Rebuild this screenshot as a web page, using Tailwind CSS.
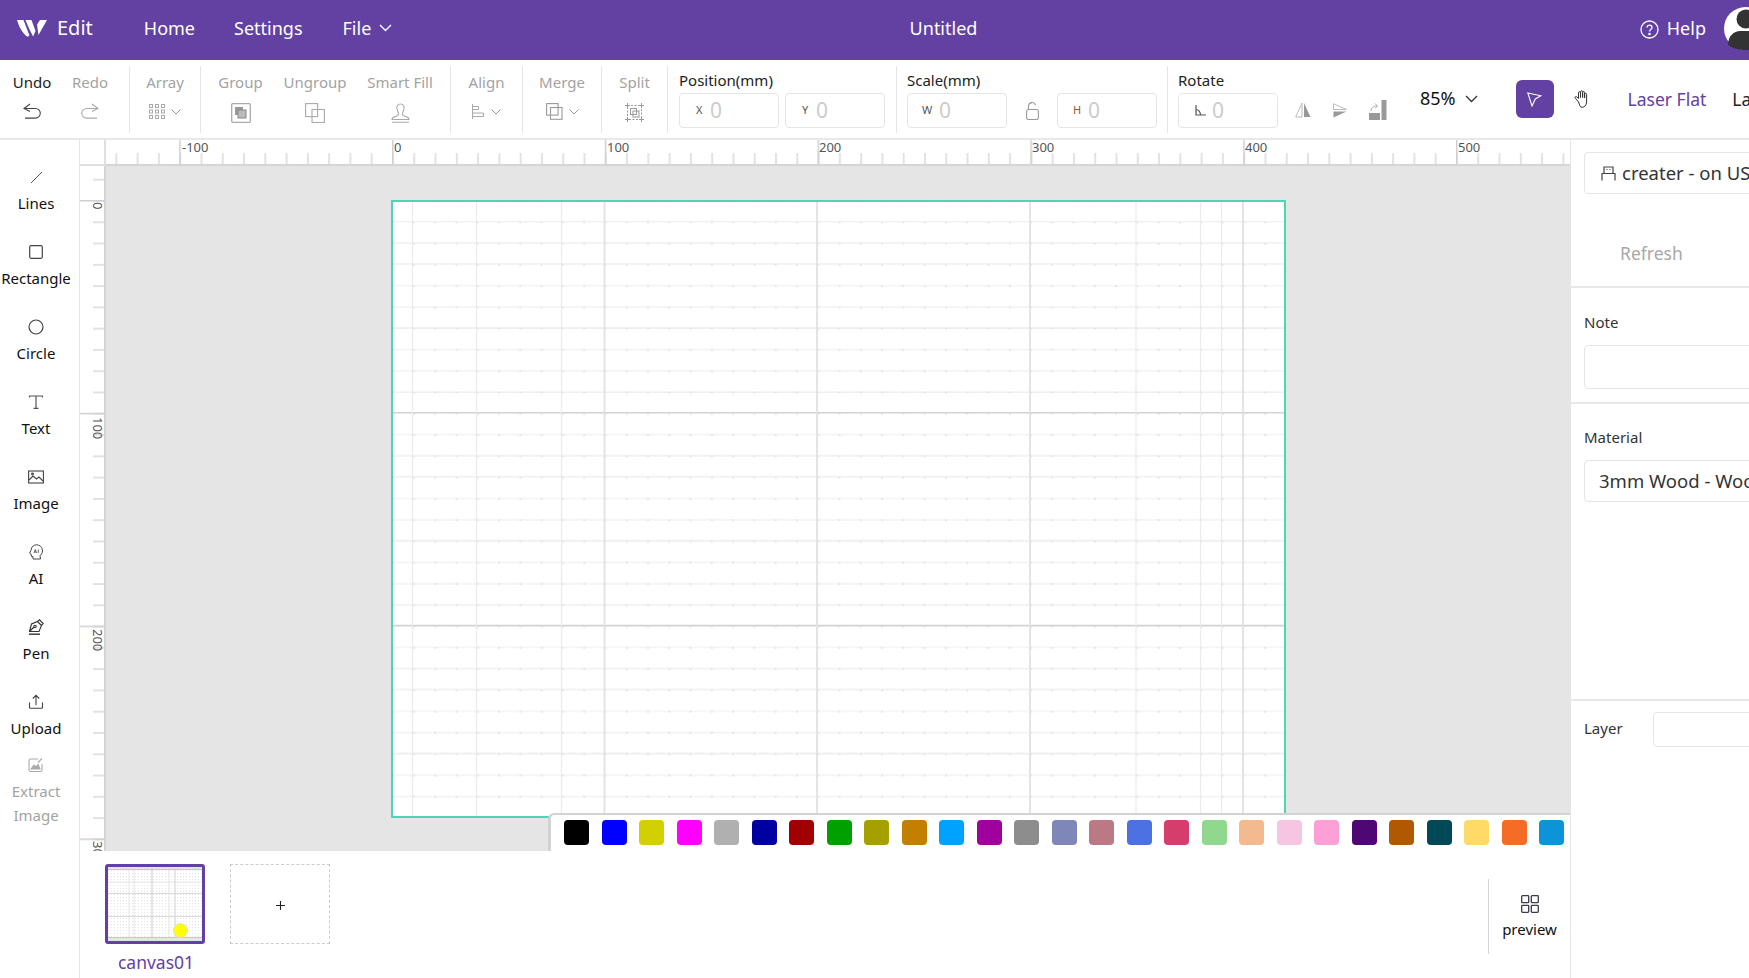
<!DOCTYPE html>
<html>
<head>
<meta charset="utf-8">
<script src="https://cdn.jsdelivr.net/npm/@tailwindcss/browser@4"></script>
</head>
<body class="m-0 bg-white">
<div class="w-[1749px] h-[978px] overflow-hidden flex flex-col bg-white text-[#222] font-['Noto_Sans','Liberation_Sans',sans-serif]">

  <!-- header -->
  <header class="h-[60px] shrink-0 bg-[#6341a3] text-white flex items-center text-[18px]">
    <div class="w-[420px] shrink-0 flex items-center mb-[4px]">
      <svg class="ml-[17px] w-[30px] h-[18px]" viewBox="0 0 30 18"><path fill="#fff" d="M0 1h6.500l6 15.500-2 1.200C6 15 2 8 0 1zM8.500 1h6l4 11-2.400 5.500C13 12 10.500 6 8.500 1zM20 5.500 23 1h7l-8.500 15z"/></svg>
      <span class="ml-[10px] text-[20px]">Edit</span>
      <span class="ml-[51px]">Home</span>
      <span class="ml-[39px]">Settings</span>
      <span class="ml-[40px]">File</span>
      <svg class="ml-[8px] w-[13px] h-[8px]" viewBox="0 0 13 8" fill="none" stroke="#fff" stroke-width="1.400"><path d="M1 1l5.500 5.500L12 1"/></svg>
    </div>
    <div class="flex-1 text-center mb-[4px]">Untitled</div>
    <div class="w-[282px] shrink-0 flex items-center justify-end">
      <svg class="w-[19px] h-[19px] mb-[2px]" viewBox="0 0 19 19" fill="none" stroke="#fff" stroke-width="1.300"><circle cx="9.500" cy="9.500" r="8.500"/><path d="M7 7.500c0-3.300 5-3.300 5 0 0 2-2.500 2-2.500 4"/><circle cx="9.500" cy="14" r=".6" fill="#fff"/></svg>
      <span class="ml-[8px] mb-[4px]">Help</span>
      <svg class="ml-[18px] mr-[-18px] mb-[3px] w-[43px] h-[43px] shrink-0" viewBox="0 0 43 43"><circle cx="21.500" cy="21.500" r="21.500" fill="#fff"/><circle cx="22" cy="12" r="9.500" fill="#333"/><path fill="#333" d="M4 38c0-9 6-14 12-14h12c6 0 11 5 11 14-4 3.500-10 5-17 5-7 0-14-2-18-5z"/></svg>
    </div>
  </header>

  <!-- toolbar -->
  <div class="h-[80px] shrink-0 flex border-b-2 border-[#e8e8e8] text-[15px] text-[#a3a3a3]">
    <div class="w-[130px] shrink-0 h-[67px] mt-[6px] pl-[3px] flex border-r border-[#e5e5e5]">
      <div class="w-[58px] flex flex-col items-center text-[#222]">
        <span class="mt-[5px] leading-[22px]">Undo</span>
        <svg class="mt-[10px] w-[18px] h-[16px]" viewBox="0 0 18 16" fill="none" stroke="#444" stroke-width="1.100"><path d="M7 1 1 5.500l6 3M1 5.500h11.500a4.800 4.800 0 0 1 0 9.600H2"/></svg>
      </div>
      <div class="w-[58px] flex flex-col items-center">
        <span class="mt-[5px] leading-[22px]">Redo</span>
        <svg class="mt-[10px] w-[18px] h-[16px]" viewBox="0 0 18 16" fill="none" stroke="#aaa" stroke-width="1.100"><path d="M11 1l6 4.500-6 3M17 5.500H5.500a4.800 4.800 0 0 0 0 9.600H16"/></svg>
      </div>
    </div>
    <div class="w-[71px] shrink-0 h-[67px] mt-[6px] flex flex-col items-center border-r border-[#e5e5e5]">
      <span class="mt-[5px] leading-[22px]">Array</span>
      <div class="mt-[11px] flex items-center gap-[6px]">
        <svg class="w-[16px] h-[15px]" viewBox="0 0 16 15" fill="none" stroke="#aaa"><rect x=".5" y=".5" width="3" height="3"/><rect x="6.500" y=".5" width="3" height="3"/><rect x="12.500" y=".5" width="3" height="3"/><rect x=".5" y="6" width="3" height="3"/><rect x="6.500" y="6" width="3" height="3"/><rect x="12.500" y="6" width="3" height="3"/><rect x=".5" y="11.500" width="3" height="3"/><rect x="6.500" y="11.500" width="3" height="3"/><rect x="12.500" y="11.500" width="3" height="3"/></svg>
        <svg class="w-[10px] h-[6px]" viewBox="0 0 10 6" fill="none" stroke="#999"><path d="M.5.500 5 5 9.500.5"/></svg>
      </div>
    </div>
    <div class="w-[250px] shrink-0 h-[67px] mt-[6px] pl-[4px] flex border-r border-[#e5e5e5]">
      <div class="w-[71px] flex flex-col items-center">
        <span class="mt-[5px] leading-[22px]">Group</span>
        <svg class="mt-[10px] w-[20px] h-[20px]" viewBox="0 0 20 20" fill="none"><rect x=".7" y=".7" width="18.600" height="18.600" rx="1" stroke="#aaa" stroke-width="1.300"/><rect x="4" y="4" width="8" height="8" fill="#999"/><rect x="7" y="7" width="8" height="8" fill="#bbb" stroke="#888"/></svg>
      </div>
      <div class="w-[78px] flex flex-col items-center">
        <span class="mt-[5px] leading-[22px]">Ungroup</span>
        <svg class="mt-[10px] w-[20px] h-[20px]" viewBox="0 0 20 20" fill="none" stroke="#aaa" stroke-width="1.100"><rect x=".6" y=".6" width="12" height="13"/><rect x="7" y="6.500" width="12.400" height="13"/></svg>
      </div>
      <div class="w-[92px] flex flex-col items-center">
        <span class="mt-[5px] leading-[22px]">Smart Fill</span>
        <svg class="mt-[10px] w-[19px] h-[20px]" viewBox="0 0 19 20" fill="none" stroke="#aaa" stroke-width="1.100"><path d="M9.500 1C6.500 1 5.500 3.500 6 6c.4 2 1.500 3 1.500 5 0 1.500-1 2-3 2.500S1 15 1 16.500h17c0-1.500-1.500-2.500-3.500-3s-3-1-3-2.500c0-2 1.100-3 1.500-5 .5-2.500-.5-5-3.500-5zM1 19.300h17"/></svg>
      </div>
    </div>
    <div class="w-[72px] shrink-0 h-[67px] mt-[6px] flex flex-col items-center border-r border-[#e5e5e5]">
      <span class="mt-[5px] leading-[22px]">Align</span>
      <div class="mt-[11px] flex items-center gap-[7px]">
        <svg class="w-[12px] h-[15px]" viewBox="0 0 12 15" fill="none" stroke="#aaa"><path d="M.5 0v15M.5 2.500h6v3h-6M.5 9h11v3.500H.5"/></svg>
        <svg class="w-[10px] h-[6px]" viewBox="0 0 10 6" fill="none" stroke="#999"><path d="M.5.500 5 5 9.500.5"/></svg>
      </div>
    </div>
    <div class="w-[79px] shrink-0 h-[67px] mt-[6px] flex flex-col items-center border-r border-[#e5e5e5]">
      <span class="mt-[5px] leading-[22px]">Merge</span>
      <div class="mt-[10px] flex items-center gap-[6px]">
        <svg class="w-[17px] h-[17px]" viewBox="0 0 17 17" fill="none" stroke="#999" stroke-width="1.100"><rect x=".6" y=".6" width="11.500" height="11.500"/><rect x="4.500" y="4.500" width="11.500" height="11.800"/></svg>
        <svg class="w-[10px] h-[6px]" viewBox="0 0 10 6" fill="none" stroke="#999"><path d="M.5.500 5 5 9.500.5"/></svg>
      </div>
    </div>
    <div class="w-[66px] shrink-0 h-[67px] mt-[6px] flex flex-col items-center border-r border-[#e5e5e5]">
      <span class="mt-[5px] leading-[22px]">Split</span>
      <svg class="mt-[10px] w-[19px] h-[19px]" viewBox="0 0 19 19" fill="none" stroke="#999"><rect x="2.500" y="2.500" width="14" height="14" stroke-dasharray="2 1.500"/><rect x="5.500" y="5.500" width="6" height="6"/><rect x="8" y="8" width="6" height="6"/><path d="M0 2.500h5M2.500 0v5M14 2.500h5M16.500 0v5M0 16.500h5M2.500 14v5M14 16.500h5M16.500 14v5"/></svg>
    </div>

    <div class="w-[229px] shrink-0 h-[67px] mt-[6px] pl-[11px] flex flex-col border-r border-[#e5e5e5] text-[#222]">
      <span class="mt-[3px] leading-[22px]">Position(mm)</span>
      <div class="mt-[2px] flex gap-[6px]">
        <div class="w-[100px] h-[35px] border border-[#e5e5e5] rounded-[4px] flex items-center pl-[16px]"><span class="text-[11px] text-[#555] w-[14px]">X</span><span class="text-[21px] text-[#ccc]">0</span></div>
        <div class="w-[100px] h-[35px] border border-[#e5e5e5] rounded-[4px] flex items-center pl-[16px]"><span class="text-[11px] text-[#555] w-[14px]">Y</span><span class="text-[21px] text-[#ccc]">0</span></div>
      </div>
    </div>
    <div class="w-[271px] shrink-0 h-[67px] mt-[6px] pl-[10px] flex flex-col border-r border-[#e5e5e5] text-[#222]">
      <span class="mt-[3px] leading-[22px]">Scale(mm)</span>
      <div class="mt-[2px] flex items-center">
        <div class="w-[100px] h-[35px] border border-[#e5e5e5] rounded-[4px] flex items-center pl-[14px]"><span class="text-[11px] text-[#555] w-[17px]">W</span><span class="text-[21px] text-[#ccc]">0</span></div>
        <div class="w-[50px] flex justify-center"><svg class="w-[13px] h-[18px]" viewBox="0 0 13 18" fill="none" stroke="#999" stroke-width="1.100"><rect x=".6" y="7.500" width="11.800" height="10" rx="2"/><path d="M2.500 7.500V4a3.600 3.600 0 0 1 7-1"/></svg></div>
        <div class="w-[100px] h-[35px] border border-[#e5e5e5] rounded-[4px] flex items-center pl-[15px]"><span class="text-[11px] text-[#8a5a2a] w-[15px]">H</span><span class="text-[21px] text-[#ccc]">0</span></div>
      </div>
    </div>
    <div class="w-[100px] shrink-0 h-[67px] mt-[6px] ml-[10px] flex flex-col text-[#222]">
      <span class="mt-[3px] leading-[22px]">Rotate</span>
      <div class="mt-[2px] w-[100px] h-[35px] border border-[#e5e5e5] rounded-[4px] flex items-center pl-[16px]">
        <svg class="w-[11px] h-[11px] mr-[6px]" viewBox="0 0 11 11" fill="none" stroke="#555" stroke-width="1.200"><path d="M1 0v10h10M1 4.500c2.500 0 4.500 2.500 4.500 5.500"/></svg><span class="text-[21px] text-[#ccc]">0</span>
      </div>
    </div>
    <div class="flex items-center shrink-0">
      <svg class="ml-[17px] mt-[22px] w-[16px] h-[16px]" viewBox="0 0 16 16"><path fill="none" stroke="#bbb" d="M7 1v14H.7z"/><path fill="#999" d="M9 1l6.500 14H9z"/></svg>
      <svg class="ml-[22px] mt-[22px] w-[14px] h-[15px]" viewBox="0 0 14 15"><path fill="none" stroke="#bbb" d="M.5.800 13.500 6.500H.5z"/><path fill="#999" d="M.5 8.500h13L.5 14.500z"/></svg>
      <svg class="ml-[22px] mt-[22px] w-[18px] h-[20px]" viewBox="0 0 18 20"><rect y="13" width="11" height="7" fill="#999"/><rect x="12.500" width="5" height="20" fill="#999"/><path fill="none" stroke="#aaa" d="M2 11c0-3 2-5 6-5M6 3.500 8.500 6 6 8.500"/></svg>
      <span class="ml-[33px] mb-[2px] text-[18px] text-[#111]">85%</span>
      <svg class="ml-[9px] w-[13px] h-[8px]" viewBox="0 0 13 8" fill="none" stroke="#333" stroke-width="1.300"><path d="M1 1l5.500 5.500L12 1"/></svg>
      <div class="ml-[38px] w-[38px] h-[38px] rounded-[6px] bg-[#6341a3] flex items-center justify-center">
        <svg class="w-[15px] h-[15px]" viewBox="0 0 15 15" fill="none" stroke="#fff" stroke-width="1.100"><path d="M.8 1 14 3.800 8.300 7 5 14z"/></svg>
      </div>
      <svg class="ml-[20px] w-[17px] h-[18px]" viewBox="0 0 17 18" fill="none" stroke="#333" stroke-width="1"><path d="M4.500 12 1.300 8.200c-.9-1.200.6-2.300 1.600-1.300L4.500 8.500V2.800c0-1.400 2-1.400 2 0V7.500V1.800c0-1.400 2.100-1.400 2.100 0V7.500V2.500c0-1.400 2-1.400 2 0V8V4.300c0-1.300 2-1.300 2 0V12c0 3-2 5.300-4.500 5.300S6 15 4.500 12z"/></svg>
      <span class="ml-[37px] text-[17.500px] text-[#6341a3] whitespace-nowrap">Laser Flat</span>
      <span class="ml-[26px] text-[17.500px] text-[#222] whitespace-nowrap">Laser</span>
    </div>
  </div>

  <!-- body -->
  <div class="flex-1 min-h-0 flex">
    <!-- tools -->
    <aside class="w-[80px] shrink-0 border-r border-[#e5e5e5] pt-[29px] pr-[7px] flex flex-col items-center gap-[29px] text-[15px] leading-[24px] text-[#111]">
      <div class="flex flex-col items-center gap-[6px]"><svg class="w-[16px] h-[16px]" viewBox="0 0 16 16" stroke="#555"><path d="M3 14 14 3"/></svg><span>Lines</span></div>
      <div class="flex flex-col items-center gap-[6px]"><svg class="w-[16px] h-[16px]" viewBox="0 0 16 16" fill="none" stroke="#444" stroke-width="1.200"><rect x="1.700" y="1.700" width="12.600" height="12.600" rx="1.500"/></svg><span>Rectangle</span></div>
      <div class="flex flex-col items-center gap-[6px]"><svg class="w-[16px] h-[16px]" viewBox="0 0 16 16" fill="none" stroke="#444" stroke-width="1.200"><circle cx="8" cy="8" r="7"/></svg><span>Circle</span></div>
      <div class="flex flex-col items-center gap-[6px]"><svg class="w-[16px] h-[16px]" viewBox="0 0 16 16" fill="none" stroke="#555" stroke-width="1.200"><path d="M1.500 3.500V2h13v1.500M8 2v12M5.500 14.300h5"/></svg><span>Text</span></div>
      <div class="flex flex-col items-center gap-[6px]"><svg class="w-[16px] h-[16px]" viewBox="0 0 16 16" fill="none" stroke="#444" stroke-width="1.100"><rect x=".6" y="2" width="14.800" height="12"/><path d="M1 11l4-4 3.500 3 2.500-2 4 4"/><circle cx="4.500" cy="5" r=".9"/></svg><span>Image</span></div>
      <div class="flex flex-col items-center gap-[6px]"><svg class="w-[16px] h-[16px]" viewBox="0 0 16 16" fill="none" stroke="#444" stroke-width="1"><path d="M5 15v-2.500H3.500L3 10 1.500 9l1.500-2.500C3 3 5.500.8 8.500.8c3.500 0 6 2.700 6 6 0 2.500-1.500 4-2.500 5l.5 3.200z"/><path d="M6 9l1.300-3.500L8.600 9M6.400 8h1.800M10.300 5.500V9" stroke-width=".8"/></svg><span>AI</span></div>
      <div class="flex flex-col items-center gap-[6px]"><svg class="w-[16px] h-[16px]" viewBox="0 0 16 16" fill="none" stroke="#333" stroke-width="1.100"><path d="M1.500 12.500 3.500 5l6-2.500 4 4L11 12.500zM9.500 2.500 11.500.8l3.700 3.700-1.700 2M1.500 12.500 6 8"/><circle cx="7" cy="7.500" r="1.200"/><path d="M1 15.200h11" stroke-width="1.400"/></svg><span>Pen</span></div>
      <div class="flex flex-col items-center gap-[6px]"><svg class="w-[16px] h-[16px]" viewBox="0 0 16 16" fill="none" stroke="#444" stroke-width="1.100"><path d="M8 11V1.500M4.800 4.500 8 1.300l3.200 3.200M1.500 8.500v4.800c0 .6.500 1 1 1h11c.5 0 1-.4 1-1V8.500"/></svg><span>Upload</span></div>
      <div class="-mt-[12px] flex flex-col items-center gap-[6px] text-[#a3a3a3]"><svg class="w-[16px] h-[16px]" viewBox="0 0 16 16" fill="none" stroke="#aaa" stroke-width="1.100"><path d="M10 2H2.500c-.8 0-1.500.7-1.500 1.500v9.500c0 .8.700 1.500 1.500 1.500h10c.8 0 1.500-.7 1.500-1.500V7"/><path d="M3 12l3-4 2 2 2-2.500 2 4.500z" fill="#aaa"/><path d="M10 5.500 14 1.500"/></svg><span class="text-center">Extract<br>Image</span></div>
    </aside>

    <!-- workspace -->
    <div class="w-[1491px] shrink-0 flex flex-col border-r border-[#e5e5e5]">
      <div class="h-[26px] shrink-0 flex">
        <div class="w-[26px] shrink-0 border-r-2 border-b-2 border-[#e0e0e0]"></div>
        <div class="relative flex-1 overflow-hidden text-[13px] leading-none text-[#555] border-b-2 border-[#d5d5d5]">
          <svg class="absolute inset-0 w-full h-full">
            <defs>
              <pattern id="tt" width="21.280" height="25" x="286" y="0" patternUnits="userSpaceOnUse"><rect x="0" y="13" width="2" height="12" fill="#e2e2e2"/></pattern>
              <pattern id="tm" width="212.800" height="25" x="286" y="0" patternUnits="userSpaceOnUse"><rect x="0" y="0" width="1.500" height="25" fill="#cfcfcf"/></pattern>
            </defs>
            <rect width="100%" height="100%" fill="url(#tt)"/><rect width="100%" height="100%" fill="url(#tm)"/>
          </svg>
          <span class="absolute left-[76px] top-[1px]">-100</span>
          <span class="absolute left-[288px] top-[1px]">0</span>
          <span class="absolute left-[501px] top-[1px]">100</span>
          <span class="absolute left-[713px] top-[1px]">200</span>
          <span class="absolute left-[926px] top-[1px]">300</span>
          <span class="absolute left-[1139px] top-[1px]">400</span>
          <span class="absolute left-[1352px] top-[1px]">500</span>
        </div>
      </div>
      <div class="h-[685px] shrink-0 flex">
        <div class="relative w-[26px] shrink-0 overflow-hidden text-[13px] leading-none text-[#555] border-r-2 border-[#d5d5d5]">
          <svg class="absolute inset-0 w-full h-full">
            <defs>
              <pattern id="lt" width="25" height="21.280" x="0" y="34" patternUnits="userSpaceOnUse"><rect x="13" y="0" width="12" height="2" fill="#e2e2e2"/></pattern>
              <pattern id="lm" width="25" height="212.800" x="0" y="34" patternUnits="userSpaceOnUse"><rect x="0" y="0" width="25" height="1.500" fill="#cfcfcf"/></pattern>
            </defs>
            <rect width="100%" height="100%" fill="url(#lt)"/><rect width="100%" height="100%" fill="url(#lm)"/>
          </svg>
          <span class="absolute left-[11px] top-[36px] [writing-mode:vertical-rl]">0</span>
          <span class="absolute left-[11px] top-[251px] [writing-mode:vertical-rl]">100</span>
          <span class="absolute left-[11px] top-[463px] [writing-mode:vertical-rl]">200</span>
          <span class="absolute left-[11px] top-[675px] [writing-mode:vertical-rl]">300</span>
        </div>
        <div class="relative flex-1 bg-[#e5e5e5] overflow-hidden">
          <div class="absolute left-[285px] top-[34px] w-[895px] h-[618px] border-2 border-[#4fd4b8] bg-white overflow-hidden">
            <svg class="absolute left-[-2px] top-[-2px] w-[895px] h-[618px]" viewBox="391 200 895 618">
              <defs>
                <pattern id="dots" width="21.280" height="21.280" x="391.700" y="200" patternUnits="userSpaceOnUse"><rect x="0" y="0" width="2" height="2" fill="#e6e6e6"/></pattern>
                <pattern id="rows" width="895" height="212.800" x="391" y="200" patternUnits="userSpaceOnUse">
                  <path stroke-width="1.100" stroke="#f0f0f0" d="M0 21.600H895M0 85.600H895M0 107H895M0 149.500H895M0 171H895"/>
                  <path stroke-width="1.100" stroke="#e8e8e8" d="M0 43H895M0 64H895M0 128H895M0 192H895"/>
                </pattern>
              </defs>
              <rect x="391" y="200" width="895" height="618" fill="url(#rows)"/>
              <rect x="391" y="200" width="895" height="618" fill="url(#dots)"/>
              <path stroke="#d2d2d2" stroke-width="1.600" fill="none" d="M391 412.800H1286M391 625.600H1286"/>
              <path stroke="#ebebeb" stroke-width="1.200" fill="none" d="M412.500 200V818M476.500 200V818M561.500 200V818M1136 200V818M1200.500 200V818M1221.500 200V818"/>
              <path stroke="#e2e2e2" stroke-width="1.800" fill="none" d="M604.500 200V818M817 200V818M1030 200V818M1243 200V818"/>
            </svg>
          </div>
          <!-- colour palette -->
          <div class="absolute left-[442px] right-0 bottom-0 h-[38px] bg-white border-t-2 border-l-3 border-[#d2d2d2] rounded-tl-[6px] pl-[13px] pt-[5px] flex gap-[12.500px]">
            <i class="block shrink-0 w-[25px] h-[25px] rounded-[4px] bg-[#000000]"></i>
            <i class="block shrink-0 w-[25px] h-[25px] rounded-[4px] bg-[#0000ff]"></i>
            <i class="block shrink-0 w-[25px] h-[25px] rounded-[4px] bg-[#d2d000]"></i>
            <i class="block shrink-0 w-[25px] h-[25px] rounded-[4px] bg-[#ff00ff]"></i>
            <i class="block shrink-0 w-[25px] h-[25px] rounded-[4px] bg-[#b0b0b0]"></i>
            <i class="block shrink-0 w-[25px] h-[25px] rounded-[4px] bg-[#0000a0]"></i>
            <i class="block shrink-0 w-[25px] h-[25px] rounded-[4px] bg-[#a00000]"></i>
            <i class="block shrink-0 w-[25px] h-[25px] rounded-[4px] bg-[#00a000]"></i>
            <i class="block shrink-0 w-[25px] h-[25px] rounded-[4px] bg-[#a3a000]"></i>
            <i class="block shrink-0 w-[25px] h-[25px] rounded-[4px] bg-[#c38000]"></i>
            <i class="block shrink-0 w-[25px] h-[25px] rounded-[4px] bg-[#00a2ff]"></i>
            <i class="block shrink-0 w-[25px] h-[25px] rounded-[4px] bg-[#a0009c]"></i>
            <i class="block shrink-0 w-[25px] h-[25px] rounded-[4px] bg-[#8d8d8d]"></i>
            <i class="block shrink-0 w-[25px] h-[25px] rounded-[4px] bg-[#7e87b8]"></i>
            <i class="block shrink-0 w-[25px] h-[25px] rounded-[4px] bg-[#bb7985]"></i>
            <i class="block shrink-0 w-[25px] h-[25px] rounded-[4px] bg-[#4b71e2]"></i>
            <i class="block shrink-0 w-[25px] h-[25px] rounded-[4px] bg-[#d53d6d]"></i>
            <i class="block shrink-0 w-[25px] h-[25px] rounded-[4px] bg-[#8fd88d]"></i>
            <i class="block shrink-0 w-[25px] h-[25px] rounded-[4px] bg-[#f2ba8e]"></i>
            <i class="block shrink-0 w-[25px] h-[25px] rounded-[4px] bg-[#f5c5e2]"></i>
            <i class="block shrink-0 w-[25px] h-[25px] rounded-[4px] bg-[#fda0d5]"></i>
            <i class="block shrink-0 w-[25px] h-[25px] rounded-[4px] bg-[#4f0873]"></i>
            <i class="block shrink-0 w-[25px] h-[25px] rounded-[4px] bg-[#b05900]"></i>
            <i class="block shrink-0 w-[25px] h-[25px] rounded-[4px] bg-[#014956]"></i>
            <i class="block shrink-0 w-[25px] h-[25px] rounded-[4px] bg-[#ffda66]"></i>
            <i class="block shrink-0 w-[25px] h-[25px] rounded-[4px] bg-[#f56c27]"></i>
            <i class="block shrink-0 w-[25px] h-[25px] rounded-[4px] bg-[#0b94d8]"></i>
          </div>
        </div>
      </div>
      <!-- canvases -->
      <div class="flex-1 flex pl-[25px] pt-[13px]">
        <div class="w-[100px] flex flex-col items-center">
          <div class="w-[100px] h-[80px] border-[3px] border-[#6341a3] rounded-[3px] bg-white overflow-hidden relative">
            <svg class="absolute inset-0 w-[94px] h-[74px]" viewBox="0 0 94 74">
              <defs><pattern id="td" width="3" height="3" patternUnits="userSpaceOnUse"><rect width="1" height="1" fill="#e6e6e6"/></pattern></defs>
              <rect width="94" height="2" fill="#e5e5e5"/><rect y="71" width="94" height="3" fill="#e5e5e5"/>
              <rect y="3" width="94" height="67" fill="url(#td)"/>
              <path stroke="#9fdccd" stroke-width="1" d="M0 2.500H94M0 70.500H94"/>
              <path stroke="#e6e6e6" d="M0 15H94M21 3V70M26 3V70M61 3V70"/>
              <path stroke="#d8d8d8" stroke-width="1.200" d="M0 26.500H94M0 49.500H94M44 3V70M67 3V70"/>
            </svg>
            <div class="absolute left-[65px] top-[56px] w-[15px] h-[15px] rounded-full bg-[#ffff00] border border-[#ddd]"></div>
          </div>
          <span class="mt-[5px] ml-[2px] text-[17.500px] leading-[26px] text-[#6341a3]">canvas01</span>
        </div>
        <div class="ml-[25px] w-[100px] h-[80px] border border-dashed border-[#ccc] flex items-center justify-center">
          <svg class="mt-[2px] w-[9px] h-[9px]" viewBox="0 0 9 9" stroke="#222" stroke-width="1.100"><path d="M0 4.500h9M4.500 0v9"/></svg>
        </div>
        <div class="ml-auto mt-[15px] h-[75px] w-[82px] border-l border-[#d5d5d5] flex flex-col items-center">
          <svg class="mt-[16px] w-[18px] h-[18px]" viewBox="0 0 18 18" fill="none" stroke="#3a3a4a" stroke-width="1.300"><rect x=".7" y=".7" width="7" height="7" rx=".8"/><rect x="10.300" y=".7" width="7" height="7" rx=".8"/><rect x=".7" y="10.300" width="7" height="7" rx=".8"/><rect x="10.300" y="10.300" width="7" height="7" rx=".8"/></svg>
          <span class="mt-[5px] text-[15px] leading-[22px] text-[#111]">preview</span>
        </div>
      </div>
    </div>

    <!-- right panel -->
    <aside class="flex-1 min-w-0 overflow-hidden flex flex-col text-[15px] text-[#333]">
      <div class="h-[148px] shrink-0 border-b-2 border-[#e8e8e8] pt-[12px] pl-[13px]">
        <div class="w-[300px] h-[42px] border border-[#e5e5e5] rounded-[4px] flex items-center pl-[16px] text-[18.500px] whitespace-nowrap">
          <svg class="w-[15px] h-[15px] shrink-0" viewBox="0 0 15 15" fill="none" stroke="#444" stroke-width="1.200"><path d="M3 7.500V1h9v6.500M1 14.500V7.500h13v7"/><path d="M5.500 3.500h1M8.500 3.500h1"/></svg>
          <span class="ml-[6px]">creater - on USB</span>
        </div>
        <div class="mt-[46px] ml-[36px] text-[17.500px] leading-[26px] text-[#a8a8a8]">Refresh</div>
      </div>
      <div class="h-[116px] shrink-0 border-b-2 border-[#e8e8e8] pl-[13px]">
        <div class="mt-[23px] leading-[22px]">Note</div>
        <div class="mt-[12px] w-[300px] h-[44px] border border-[#e5e5e5] rounded-[4px]"></div>
      </div>
      <div class="h-[297px] shrink-0 border-b-2 border-[#e8e8e8] pl-[13px]">
        <div class="mt-[22px] leading-[22px]">Material</div>
        <div class="mt-[12px] w-[300px] h-[42px] border border-[#e5e5e5] rounded-[4px] flex items-center pl-[14px] text-[18.500px] whitespace-nowrap">3mm Wood - Wood</div>
      </div>
      <div class="pl-[13px] mt-[11px] flex items-center">
        <span class="w-[69px] shrink-0 leading-[22px] mb-[4px]">Layer</span>
        <div class="w-[200px] h-[35px] border border-[#e5e5e5] rounded-[4px] shrink-0"></div>
      </div>
    </aside>
  </div>
</div>
</body>
</html>
